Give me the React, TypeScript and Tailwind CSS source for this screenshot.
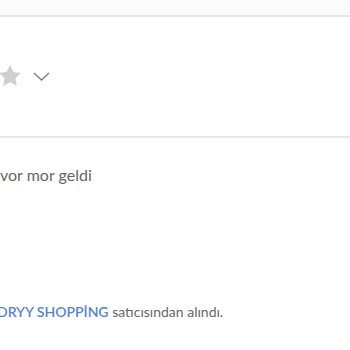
export default function App() {
  return (
    <main className="w-[350px] h-[350px] overflow-hidden bg-white font-['Lato',sans-serif]">
      <div className="h-[17px] bg-[#fbfbfb] border-b-2 border-[#e6e6e6]" />
      <div className="flex items-center gap-[10px] h-[121px] -ml-[3px] border-b-2 border-[#e8e8e8]">
        <svg width="26" height="26" viewBox="0 0 24 24" className="text-[#cfcfcf] -mt-[2px]">
          <path fill="currentColor" d="M12 1.8l3.1 6.5 7.1.9-5.2 4.9 1.3 7.1L12 17.8l-6.3 3.4 1.3-7.1L1.8 9.2l7.1-.9z" />
        </svg>
        <svg width="17" height="11" viewBox="0 0 17 11" fill="none" className="text-[#7a7a7a]">
          <path d="M1 2l7.5 7L16 2" stroke="currentColor" strokeWidth="1.3" />
        </svg>
      </div>
      <p className="mt-[25px] text-[16px] leading-[24px] text-[#666]">vor mor geldi</p>
      <p className="mt-[115px] -ml-[3px] text-[14px] leading-[20px] text-[#666]">
        <span className="font-semibold text-[#5585d0]">DRYY SHOPPİNG</span> satıcısından alındı.
      </p>
    </main>
  )
}
